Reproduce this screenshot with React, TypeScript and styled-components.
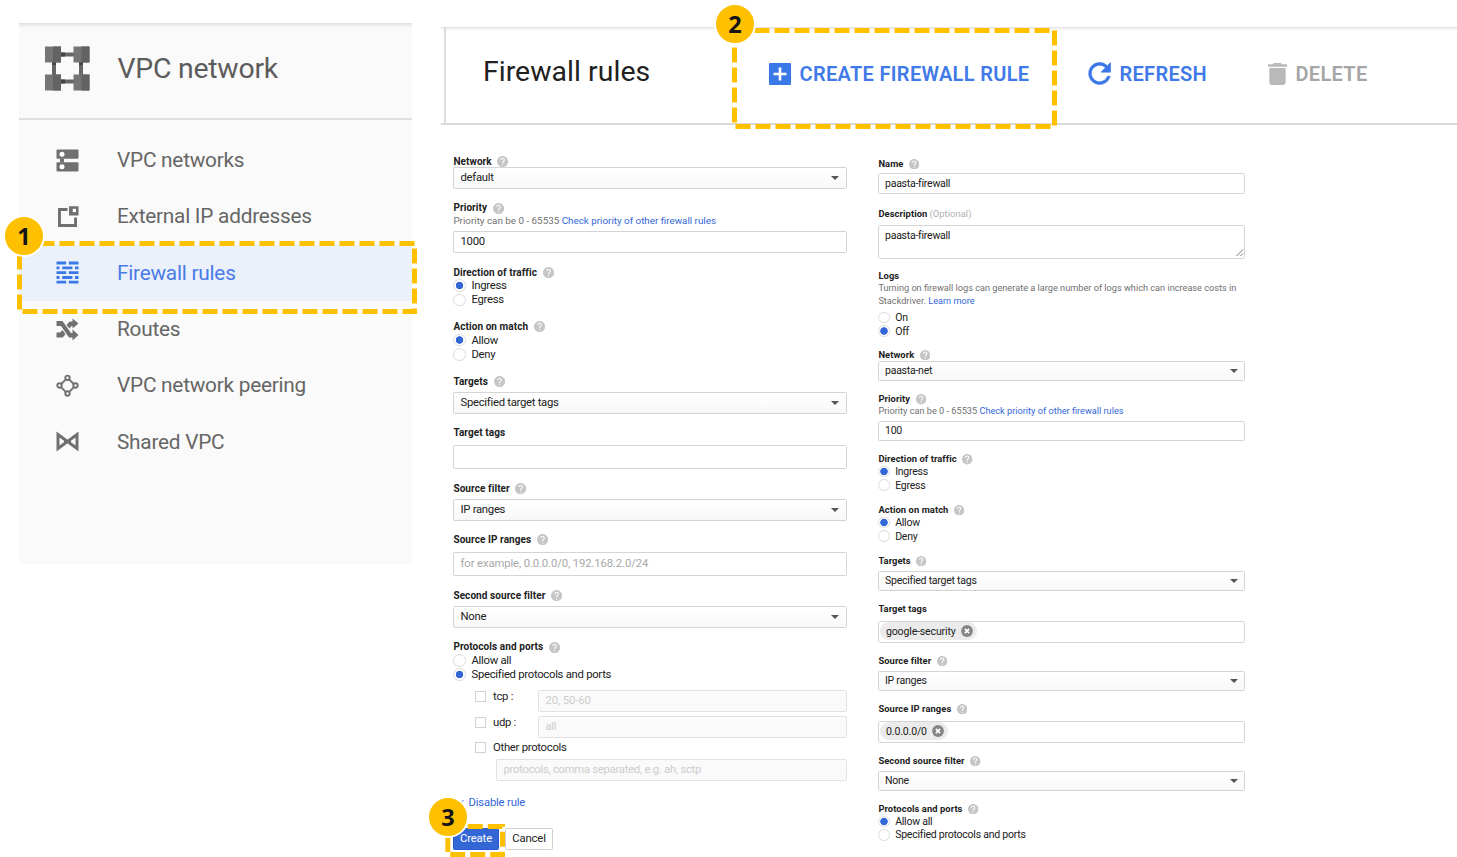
import React from "react";
import styled, { createGlobalStyle, css } from "styled-components";

const GlobalStyle = createGlobalStyle`
  * { box-sizing: border-box; }
  body {
    margin: 0;
    background: #fff;
    overflow: hidden;
    font-family: Roboto, "Liberation Sans", sans-serif;
    color: #212121;
  }
`;

const Page = styled.div`
  position: relative;
  display: flex;
  align-items: flex-start;
  gap: 29px;
  width: 1457px;
  height: 857px;
  overflow: hidden;
`;

/* ---------- Sidebar ---------- */

const Sidebar = styled.nav`
  flex: none;
  width: 393px;
  height: 541px;
  margin: 23px 0 0 19px;
  background: linear-gradient(#dedede, #f3f3f3 3px, #fafafa 5px);
`;

const SidebarHead = styled.div`
  display: flex;
  align-items: center;
  gap: 27.500px;
  height: 97px;
  padding: 0 0 4px 26px;
  border-bottom: 2px solid #dfdfdf;
`;

const SidebarTitle = styled.h2`
  margin: 0;
  font-size: 28.4px;
  font-weight: 400;
  line-height: 34px;
  letter-spacing: -0.24px;
  color: #5c5c5c;
`;

const Menu = styled.ul`
  list-style: none;
  margin: 0;
  padding: 12px 0 0;
`;

const MenuItem = styled.li<{ $active?: boolean }>`
  display: flex;
  align-items: center;
  gap: 38px;
  height: 56.3px;
  padding-left: 37px;
  font-size: 20.8px;
  line-height: 24px;
  letter-spacing: -0.24px;
  color: ${(p) => (p.$active ? "#4a7be6" : "#666")};
  background: ${(p) => (p.$active ? "#eaf1fb" : "transparent")};
  svg {
    flex: none;
    color: ${(p) => (p.$active ? "#3b78e7" : "#707070")};
  }
`;

/* ---------- Main ---------- */

const Main = styled.main`
  flex: 1;
  padding-top: 27px;
`;

const Header = styled.header`
  display: flex;
  align-items: center;
  height: 98px;
  padding: 0 0 6px 42px;
  border-bottom: 2px solid #dadada;
  background:
    linear-gradient(90deg, transparent 3px, #dcdcdc 3px, #dcdcdc 5px, transparent 5px),
    linear-gradient(#dfdfdf, #f5f5f5 2px, #fff 5px);
`;

const HeaderTitle = styled.h1`
  width: 286px;
  margin: 0;
  font-size: 28.4px;
  font-weight: 400;
  line-height: 34px;
  letter-spacing: 0.05px;
  color: #212121;
`;

const Action = styled.button<{ $w: number; $muted?: boolean }>`
  display: flex;
  align-items: center;
  gap: 8.5px;
  width: ${(p) => p.$w}px;
  padding: 3px 0 0;
  border: 0;
  background: none;
  font: 600 20px/24px Roboto, sans-serif;
  letter-spacing: 0.32px;
  white-space: nowrap;
  text-align: left;
  color: ${(p) => (p.$muted ? "#a6a6a6" : "#4079e8")};
  svg {
    flex: none;
    color: ${(p) => (p.$muted ? "#b9b9b9" : "#3b78e7")};
  }
`;

const Forms = styled.div`
  display: flex;
  align-items: flex-start;
  padding-left: 12px;
`;

const FormColumn = styled.section<{ $small?: boolean }>`
  display: flex;
  flex-direction: column;
  flex: none;
  ${(p) =>
    p.$small
      ? css`
          width: 367px;
          margin-left: 31px;
          padding-top: 33px;
          --label: 9.35px;
          --hint: 9.18px;
          --text: 10.55px;
          --track: -0.26px;
          --radio-row: 13.4px;
          --radio: 11.5px;
          --radio-gap: 5.4px;
          --help: 10.4px;
          --inset: 6px;
          --lift: 1px;
          --caret-right: 0px;
        `
      : css`
          width: 394px;
          padding-top: 30px;
          --label: 10px;
          --hint: 9.84px;
          --text: 11.3px;
          --track: -0.28px;
          --radio-row: 14.3px;
          --radio: 12.6px;
          --radio-gap: 5.6px;
          --help: 11.2px;
          --inset: 6.5px;
          --lift: 0px;
          --caret-right: 1px;
        `}
`;

const Label = styled.div<{ $mt?: number }>`
  display: flex;
  align-items: center;
  gap: 5.6px;
  height: 12px;
  margin: ${(p) => p.$mt ?? 0}px 0 0 0.4px;
  font-size: var(--label);
  font-weight: 700;
  line-height: 12px;
  letter-spacing: 0.08px;
  white-space: nowrap;
  color: #212121;
  svg {
    flex: none;
    width: var(--help);
    height: var(--help);
  }
`;

const Optional = styled.span`
  margin-left: -3.5px;
  font-weight: 400;
  color: #b0b0b0;
`;

const Hint = styled.div<{ $mt?: number }>`
  margin: ${(p) => p.$mt ?? 0}px 0 0 0.4px;
  font-size: var(--hint);
  line-height: 13px;
  white-space: nowrap;
  color: #707070;
`;

const Link = styled.a`
  color: #3367d6;
`;

const boxed = css<{ $mt?: number; $h: number }>`
  display: flex;
  align-items: center;
  width: 100%;
  height: ${(p) => p.$h}px;
  margin-top: ${(p) => p.$mt ?? 0}px;
  padding: 0 var(--inset) var(--lift);
  border: 1px solid #d4d4d4;
  border-radius: 1.5px;
  font-size: var(--text);
  line-height: 13px;
  letter-spacing: var(--track);
  white-space: nowrap;
`;

const SelectBox = styled.div<{ $mt?: number; $h: number }>`
  ${boxed}
  justify-content: space-between;
  background: linear-gradient(#fff, #f8f8f8);
`;

const Caret = styled.i`
  margin: var(--lift) var(--caret-right) 0 0;
  border: solid transparent;
  border-width: 4px 4px 0;
  border-top-color: #555;
`;

const InputBox = styled.div<{ $mt?: number; $h: number; $placeholder?: boolean; $disabled?: boolean }>`
  ${boxed}
  letter-spacing: ${(p) => (p.$placeholder ? "-0.12px" : "var(--track)")};
  color: ${(p) => (p.$disabled ? "#cdcdcd" : p.$placeholder ? "#a8a8a8" : "inherit")};
  background: ${(p) => (p.$disabled ? "#fafafa" : "#fff")};
  border-color: ${(p) => (p.$disabled ? "#e2e2e2" : "#d4d4d4")};
`;

const TextArea = styled.div<{ $mt?: number; $h: number }>`
  ${boxed}
  align-items: flex-start;
  justify-content: space-between;
  padding-top: 3px;
  padding-right: 0;
  svg { align-self: flex-end; }
`;

const Chip = styled.span`
  display: flex;
  align-items: center;
  gap: 5.5px;
  height: 18px;
  margin-left: -5px;
  padding: 0 4px 0 6px;
  border-radius: 9px;
  background: #ebebeb;
  letter-spacing: -0.16px;
`;

const RadioRow = styled.label<{ $mt?: number }>`
  display: flex;
  align-items: center;
  gap: var(--radio-gap);
  height: var(--radio-row);
  margin: ${(p) => p.$mt ?? 0}px 0 0 0.3px;
  font-size: var(--text);
  line-height: 13px;
  letter-spacing: var(--track);
  white-space: nowrap;
`;

const RadioDot = styled.span<{ $on?: boolean }>`
  flex: none;
  width: var(--radio);
  height: var(--radio);
  border: 1px solid #dcdcdc;
  border-radius: 50%;
  background: ${(p) => (p.$on ? "radial-gradient(circle, #3367d6 3.4px, #fff 4.1px)" : "#fff")};
`;

const Protocol = styled.div<{ $mt: number; $h: number }>`
  display: flex;
  align-items: flex-start;
  height: ${(p) => p.$h}px;
  margin-top: ${(p) => p.$mt}px;
  padding-left: 22px;
`;

const CheckLabel = styled.label`
  display: flex;
  align-items: center;
  flex: none;
  gap: 7px;
  width: 63px;
  height: 13px;
  font-size: var(--text);
  line-height: 13px;
  letter-spacing: var(--track);
  white-space: nowrap;
`;

const CheckBox = styled.span`
  flex: none;
  width: 11px;
  height: 11px;
  border: 1px solid #d2d2d2;
`;

const Indent = styled.div`
  padding-left: 43px;
`;

const DisableLink = styled.a`
  display: flex;
  align-items: center;
  gap: 3.6px;
  height: 13px;
  margin-top: 15px;
  padding-left: 3px;
  font-size: var(--text);
  line-height: 13px;
  letter-spacing: -0.2px;
  color: #3367d6;
`;

const Buttons = styled.div`
  display: flex;
  gap: 6px;
  margin-top: 19px;
`;

const Button = styled.button<{ $primary?: boolean }>`
  width: ${(p) => (p.$primary ? 46 : 48)}px;
  height: 22px;
  padding: 0;
  border: 1px solid ${(p) => (p.$primary ? "#2a56c6" : "#d0d0d0")};
  border-radius: 1.5px;
  background: ${(p) => (p.$primary ? "#3367d6" : "#fff")};
  color: ${(p) => (p.$primary ? "#fff" : "#212121")};
  font: 11.3px/13px Roboto, sans-serif;
  letter-spacing: -0.15px;
`;

/* ---------- Callouts laid over the page ---------- */

const Callouts = styled.svg`
  position: absolute;
  inset: 0;
  pointer-events: none;
`;

const Step = styled.div<{ $x: number; $y: number }>`
  position: absolute;
  left: ${(p) => p.$x - 21}px;
  top: ${(p) => p.$y - 21}px;
  width: 42px;
  height: 42px;
  border: 2px solid #fff;
  border-radius: 50%;
  background: #ffc000;
  color: #151515;
  font: 700 23.5px/38px "Noto Sans", "Open Sans", sans-serif;
  text-align: center;
`;

/* ---------- Icons ---------- */

const VpcLogo = () => (
  <svg width="45" height="45" viewBox="0 0 45 45">
    <path d="M16 6.500h13v4H16zM16 33.500h13v4H16zM7 16h4v13H7zM34 16h4v13h-4z" fill="#666" />
    <path d="M16 6.500h4v4h-4zM16 33.500h4v4h-4zM7 16h4v3H7zM34 16h4v3h-4z" fill="#444" />
    <path d="M0 .5h16v16H0zM28.500 .5h16v16h-16zM0 28.500h16v16H0zM28.500 28.500h16v16h-16z" fill="#757575" />
    <path d="M8 .5h8v16H8zM36.500 .5h8v16h-8zM8 28.500h8v16H8zM36.500 28.500h8v16h-8z" fill="#636363" />
  </svg>
);

const NetworksIcon = () => (
  <svg width="23" height="23" viewBox="0 0 23 23" fill="currentColor">
    <rect x=".5" y=".6" width="22" height="9.200" rx="1" />
    <rect x=".5" y="13.200" width="22" height="9.200" rx="1" />
    <path d="M4 9.500h4v4H4z" />
    <circle cx="6" cy="5.300" r="2.500" fill="#fff" />
    <circle cx="6" cy="17.700" r="2.500" fill="#fff" />
  </svg>
);

const ExternalIcon = () => (
  <svg width="23" height="23" viewBox="0 0 23 23" fill="currentColor">
    <path d="M2 3h9.500v2.900H4.900v13.200h13.200V12.500H21V22H2zM13 1.200h9.500v9.300H13z" />
    <path d="M16.700 3.800h3.300v3.300h-3.300z" fill="#fff" />
  </svg>
);

const FirewallIcon = () => (
  <svg width="23" height="23" viewBox="0 0 23 23" fill="currentColor">
    <path d="M.5 .6h9.700v2.900H.5zM12.800 .6h9.700v2.900h-9.700zM.5 5.400h3v2.900h-3zM6.200 5.400h10.200v2.900H6.200zM19 5.400h3.500v2.900H19zM.5 10.200h9.700v2.900H.5zM12.800 10.200h9.700v2.900h-9.700zM.5 15h3v2.900h-3zM6.200 15h10.200v2.900H6.200zM19 15h3.500v2.900H19zM.5 19.700h9.700v2.900H.5zM12.800 19.700h9.700v2.900h-9.700z" />
  </svg>
);

const RoutesIcon = () => (
  <svg width="23" height="23" viewBox="0 0 23 23" fill="currentColor">
    <path d="M.5 3h6L15 15h1.500v-3.500l6 5.500-6 5.500V19.500h-3.500L5 8H.5z" />
    <path d="M16.500 .5l6 5-6 5V8h-1l-2 2.500L10.500 7l3-3.500h3zM.5 14.500h3.500L6.500 12l3 4.200-2.800 3.300H.5z" />
  </svg>
);

const PeeringIcon = () => (
  <svg width="23" height="23" viewBox="0 0 23 23" fill="none" stroke="currentColor" strokeWidth="1.900">
    <circle cx="11.500" cy="3.800" r="2.200" />
    <circle cx="3.500" cy="11.500" r="2.200" />
    <circle cx="19.500" cy="11.500" r="2.200" />
    <circle cx="11.500" cy="19.500" r="2.200" />
    <path d="M9.700 5.600L5.500 9.700M13.300 5.600l4.200 4.100M5.300 13.300l4.400 4.500M17.700 13.300l-4.400 4.500" />
  </svg>
);

const SharedIcon = () => (
  <svg width="23" height="23" viewBox="0 0 23 23" fill="none" stroke="currentColor" strokeWidth="3">
    <path d="M2 4.500v14L11.500 11.500zM21 4.500v14L11.500 11.500z" />
    <path d="M8.500 8.800v5.400l6-5.400v5.400z" fill="currentColor" strokeWidth="1" />
  </svg>
);

const AddIcon = () => (
  <svg width="22" height="22" viewBox="0 0 22 22">
    <rect width="22" height="22" rx="1" fill="currentColor" />
    <path d="M11 4.500v13M4.500 11h13" stroke="#fff" strokeWidth="2.600" />
  </svg>
);

const RefreshIcon = () => (
  <svg width="24" height="23" viewBox="3.200 3.600 16.700 16.800" fill="currentColor" stroke="currentColor" strokeWidth=".45">
    <path d="M17.650 6.350C16.200 4.900 14.210 4 12 4c-4.420 0-7.990 3.580-7.990 8s3.570 8 7.990 8c3.730 0 6.840-2.550 7.730-6h-2.080c-.82 2.330-3.040 4-5.650 4-3.310 0-6-2.690-6-6s2.690-6 6-6c1.660 0 3.140.69 4.220 1.780L13 11h7V4l-2.350 2.350z" />
  </svg>
);

const TrashIcon = () => (
  <svg width="19" height="22" viewBox="5 3 14 18" preserveAspectRatio="none" fill="currentColor">
    <path d="M6 19c0 1.100.9 2 2 2h8c1.100 0 2-.9 2-2V7H6v12zM19 4h-3.500l-1-1h-5l-1 1H5v2h14V4z" />
  </svg>
);

const Help = () => (
  <svg viewBox="2 2 20 20" fill="#c6c6c6">
    <path d="M12 2C6.480 2 2 6.480 2 12s4.480 10 10 10 10-4.480 10-10S17.520 2 12 2zm1 17h-2v-2h2v2zm2.070-7.750l-.9.920C13.450 12.900 13 13.500 13 15h-2v-.5c0-1.100.45-2.100 1.170-2.830l1.240-1.260c.37-.36.590-.86.590-1.410 0-1.100-.9-2-2-2s-2 .9-2 2H8c0-2.210 1.790-4 4-4s4 1.790 4 4c0 .88-.36 1.680-.93 2.250z" />
  </svg>
);

const RemoveIcon = () => (
  <svg width="12" height="12" viewBox="0 0 12 12">
    <circle cx="6" cy="6" r="5.900" fill="#858585" />
    <path d="M3.900 3.900l4.200 4.200M8.100 3.900L3.900 8.100" stroke="#fff" strokeWidth="1.700" />
  </svg>
);

const Grip = () => (
  <svg width="9" height="9" viewBox="0 0 9 9" stroke="#777" strokeWidth="1">
    <path d="M1.500 8L8 1.500M5.500 8L8 5.500" />
  </svg>
);

/* ---------- Form pieces ---------- */

type BoxProps = { mt?: number; h: number; children?: React.ReactNode };

const Title = ({ mt, help = true, children }: { mt?: number; help?: boolean; children: React.ReactNode }) => (
  <Label $mt={mt}>
    {children}
    {help && <Help />}
  </Label>
);

const Select = ({ mt, h, children }: BoxProps) => (
  <SelectBox $mt={mt} $h={h}>
    {children}
    <Caret />
  </SelectBox>
);

const Radio = ({ on, mt, children }: { on?: boolean; mt?: number; children: React.ReactNode }) => (
  <RadioRow $mt={mt}>
    <RadioDot $on={on} />
    {children}
  </RadioRow>
);

const PriorityHint = ({ mt }: { mt?: number }) => (
  <Hint $mt={mt}>
    Priority can be 0 - 65535 <Link>Check priority of other firewall rules</Link>
  </Hint>
);

const BlankForm = () => (
  <FormColumn>
    <Title mt={0.5}>Network</Title>
    <Select mt={-0.5} h={21.600}>default</Select>
    <Title mt={13.9}>Priority</Title>
    <PriorityHint mt={-0.5} />
    <InputBox $mt={4} $h={22}>1000</InputBox>
    <Title mt={14}>Direction of traffic</Title>
    <Radio on mt={-0.6}>Ingress</Radio>
    <Radio>Egress</Radio>
    <Title mt={14}>Action on match</Title>
    <Radio on>Allow</Radio>
    <Radio>Deny</Radio>
    <Title mt={14}>Targets</Title>
    <Select mt={4.4} h={22}>Specified target tags</Select>
    <Title mt={12.6} help={false}>Target tags</Title>
    <InputBox $mt={6.4} $h={24} />
    <Title mt={14}>Source filter</Title>
    <Select mt={4} h={22}>IP ranges</Select>
    <Title mt={12.6}>Source IP ranges</Title>
    <InputBox $mt={6.4} $h={24} $placeholder>for example, 0.0.0.0/0, 192.168.2.0/24</InputBox>
    <Title mt={14}>Second source filter</Title>
    <Select mt={4} h={22}>None</Select>
    <Title mt={13.4}>Protocols and ports</Title>
    <Radio>Allow all</Radio>
    <Radio on>Specified protocols and ports</Radio>
    <Protocol $mt={8} $h={21}>
      <CheckLabel><CheckBox />tcp :</CheckLabel>
      <InputBox $h={22} $disabled $placeholder>20, 50-60</InputBox>
    </Protocol>
    <Protocol $mt={5} $h={21}>
      <CheckLabel><CheckBox />udp :</CheckLabel>
      <InputBox $h={22} $disabled>all</InputBox>
    </Protocol>
    <Protocol $mt={4.500} $h={13}>
      <CheckLabel><CheckBox />Other protocols</CheckLabel>
    </Protocol>
    <Indent>
      <InputBox $mt={4.500} $h={22} $disabled>protocols, comma separated, e.g. ah, sctp</InputBox>
    </Indent>
    <DisableLink>
      <svg width="9" height="6" viewBox="0 0 9 6" fill="none" stroke="currentColor">
        <path d="M1.500 1l3 3 3-3" />
      </svg>
      Disable rule
    </DisableLink>
    <Buttons>
      <Button $primary>Create</Button>
      <Button>Cancel</Button>
    </Buttons>
  </FormColumn>
);

const FilledForm = () => (
  <FormColumn $small>
    <Title>Name</Title>
    <InputBox $mt={3} $h={21}>paasta-firewall</InputBox>
    <Label $mt={14}>Description <Optional>(Optional)</Optional></Label>
    <TextArea $mt={5} $h={34}>
      paasta-firewall
      <Grip />
    </TextArea>
    <Title mt={11} help={false}>Logs</Title>
    <Hint $mt={-0.8}>
      Turning on firewall logs can generate a large number of logs which can increase costs in
      <br />
      Stackdriver. <Link>Learn more</Link>
    </Hint>
    <Radio mt={3.8}>On</Radio>
    <Radio on>Off</Radio>
    <Title mt={11.2}>Network</Title>
    <Select h={20}>paasta-net</Select>
    <Title mt={12.500}>Priority</Title>
    <PriorityHint mt={-1.2} />
    <InputBox $mt={3.7} $h={20}>100</InputBox>
    <Title mt={12.500}>Direction of traffic</Title>
    <Radio on mt={-0.5}>Ingress</Radio>
    <Radio>Egress</Radio>
    <Title mt={12.2}>Action on match</Title>
    <Radio on>Allow</Radio>
    <Radio>Deny</Radio>
    <Title mt={12.2}>Targets</Title>
    <Select mt={4} h={20}>Specified target tags</Select>
    <Title mt={12} help={false}>Target tags</Title>
    <InputBox $mt={6} $h={22}>
      <Chip>google-security<RemoveIcon /></Chip>
    </InputBox>
    <Title mt={12}>Source filter</Title>
    <Select mt={4} h={20}>IP ranges</Select>
    <Title mt={12}>Source IP ranges</Title>
    <InputBox $mt={6} $h={22}>
      <Chip>0.0.0.0/0<RemoveIcon /></Chip>
    </InputBox>
    <Title mt={12}>Second source filter</Title>
    <Select mt={4} h={20}>None</Select>
    <Title mt={12}>Protocols and ports</Title>
    <Radio on>Allow all</Radio>
    <Radio>Specified protocols and ports</Radio>
  </FormColumn>
);

export default function App() {
  return (
    <>
      <GlobalStyle />
      <Page>
        <Sidebar>
          <SidebarHead>
            <VpcLogo />
            <SidebarTitle>VPC network</SidebarTitle>
          </SidebarHead>
          <Menu>
            <MenuItem><NetworksIcon />VPC networks</MenuItem>
            <MenuItem><ExternalIcon />External IP addresses</MenuItem>
            <MenuItem $active><FirewallIcon />Firewall rules</MenuItem>
            <MenuItem><RoutesIcon />Routes</MenuItem>
            <MenuItem><PeeringIcon />VPC network peering</MenuItem>
            <MenuItem><SharedIcon />Shared VPC</MenuItem>
          </Menu>
        </Sidebar>
        <Main>
          <Header>
            <HeaderTitle>Firewall rules</HeaderTitle>
            <Action $w={318}><AddIcon />CREATE FIREWALL RULE</Action>
            <Action $w={181}><RefreshIcon />REFRESH</Action>
            <Action $w={110} $muted><TrashIcon />DELETE</Action>
          </Header>
          <Forms>
            <BlankForm />
            <FilledForm />
          </Forms>
        </Main>
        <Callouts width="1457" height="857" fill="none" stroke="#ffc000" strokeWidth="5" strokeDasharray="15 5">
          <rect x="19.500" y="243.500" width="395" height="68" />
          <rect x="734.500" y="30.500" width="320" height="96" />
          <rect x="447.800" y="826.500" width="54.700" height="28" />
        </Callouts>
        <Step $x={24} $y={236}>1</Step>
        <Step $x={735} $y={24}>2</Step>
        <Step $x={448} $y={817}>3</Step>
      </Page>
    </>
  );
}
